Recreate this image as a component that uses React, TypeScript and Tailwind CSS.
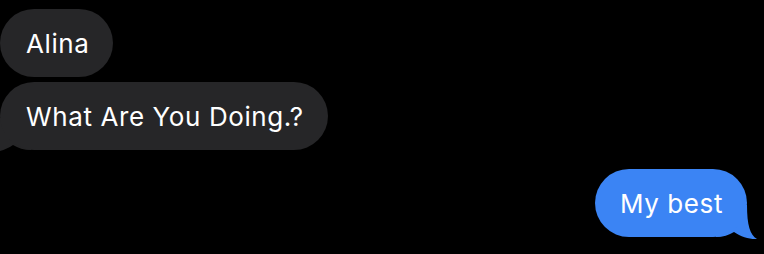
export default function App() {
  return (
    <div
      className="w-[764px] h-[254px] bg-black overflow-hidden flex flex-col pt-[9px]"
      style={{ fontFamily: 'Inter, "Noto Sans", sans-serif' }}
    >
      {/* Received */}
      <div className="flex flex-col items-start gap-[5px]">
        <div className="h-[68px] pl-[26px] pr-[23px] flex items-center rounded-[34px] bg-[#262628] text-white text-[26px] tracking-[0.6px]">
          Alina
        </div>
        <div className="relative">
          <svg
            className="absolute left-[-11px] bottom-[-3px] -scale-x-100"
            width="43"
            height="40"
            viewBox="0 0 43 40"
          >
            <path
              d="M32 5 C32 25 35 35 42 39 C35 39.5 26 37 19 32 C14 35 8 37 1 37 L1 5 Z"
              fill="#262628"
            />
          </svg>
          <div className="relative h-[68px] pl-[26px] pr-[24px] flex items-center rounded-[34px] bg-[#262628] text-white text-[26px] tracking-[0.6px]">
            What Are You Doing.?
          </div>
        </div>
      </div>

      {/* Sent */}
      <div className="flex justify-end pr-[17px] mt-[19px]">
        <div className="relative">
          <svg
            className="absolute right-[-11px] bottom-[-3px]"
            width="43"
            height="40"
            viewBox="0 0 43 40"
          >
            <path
              d="M32 5 C32 25 35 35 42 39 C35 39.5 26 37 19 32 C14 35 8 37 1 37 L1 5 Z"
              fill="#3b84f4"
            />
          </svg>
          <div className="relative h-[68px] pl-[25px] pr-[24px] flex items-center rounded-[34px] bg-[#3b84f4] text-white text-[26px] tracking-[0.6px]">
            My best
          </div>
        </div>
      </div>
    </div>
  );
}
